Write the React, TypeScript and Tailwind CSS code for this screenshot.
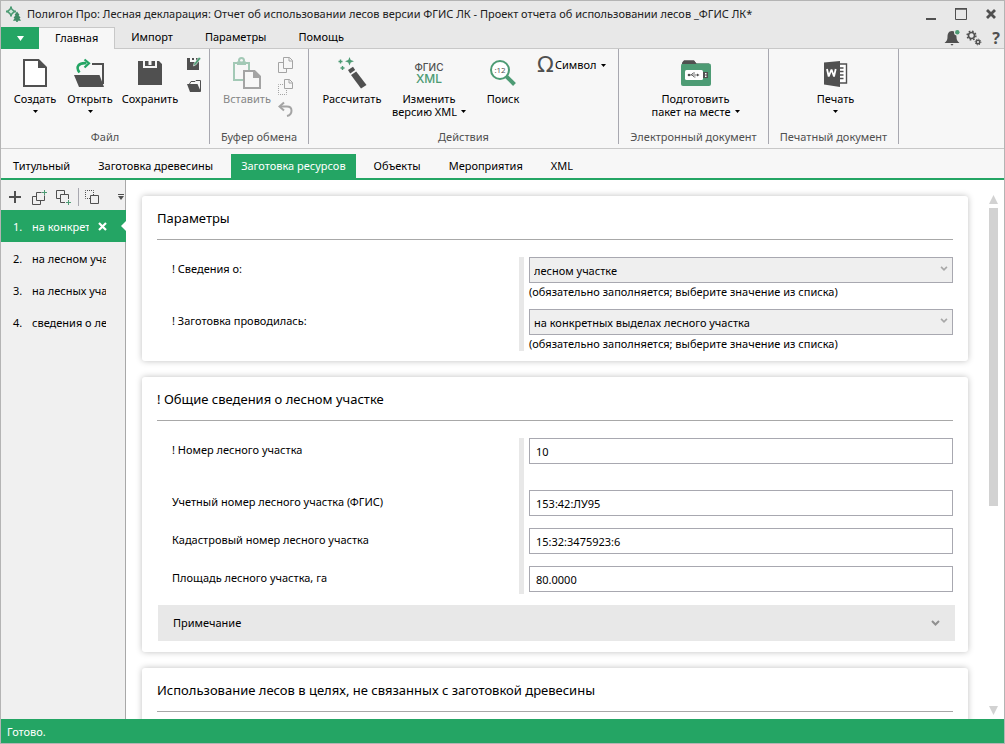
import { useState, type ReactNode } from "react";

function LogoIcon() {
  return (
    <svg className="size-4" viewBox="0 0 16 16" fill="none">
      <path d="M6 .5v2M6 8.500v2M1 5.500h2M9 5.500h2" stroke="#4d9b74" strokeWidth="2" />
      <path d="M6 2.200 9.300 5.500 6 8.800 2.700 5.500Z" fill="#cfe6da" stroke="#4d9b74" strokeWidth="1.600" />
      <path d="M12 5.500 14.600 9h-1l2 3h-1.200l1.600 2.700h-3.200V16h-1.600v-1.300H8L9.600 12H8.500l2-3h-1Z" fill="#3f8a65" />
    </svg>
  );
}

function NewIcon() {
  return (
    <svg className="h-8 w-7" viewBox="0 0 28 32">
      <path d="M3 3h14.500L25 10.500V29H3Z" fill="#fff" stroke="#505050" strokeWidth="2" />
      <path d="M17 2 26 11h-9Z" fill="#505050" />
    </svg>
  );
}

function OpenIcon() {
  return (
    <svg className="h-8 w-8" viewBox="0 0 32 32">
      <path d="M18 7h11v20" fill="none" stroke="#505050" strokeWidth="2" />
      <path d="M0 18h25.500L30 30H5Z" fill="#505050" />
      <path d="M5.500 15.500C1 9.500 5 5.500 12.500 6.200" fill="none" stroke="#24a564" strokeWidth="2.600" />
      <path d="M10.500 2.500 15 6.200l-4.500 4.300" fill="none" stroke="#24a564" strokeWidth="2.200" />
    </svg>
  );
}

function SaveIcon() {
  return (
    <svg className="h-8 w-6" viewBox="0 0 24 32">
      <path d="M0 4h5v9h14V4h2l3 3v21H0Z" fill="#505050" />
      <path d="M7 4h10v7H7Z" fill="#505050" />
      <path d="M5 4h2v5h10V4h2v7H5Z" fill="#f7f7f7" />
      <path d="M10.500 4h3v4h-3Z" fill="#f7f7f7" />
      <path d="M5 11h14v3H5Z" fill="#505050" />
    </svg>
  );
}

function SaveAsIcon() {
  return (
    <svg className="size-[14px]" viewBox="0 0 14 14">
      <path d="M0 1h3v4h6V1h3v12H0Z" fill="#505050" />
      <path d="M5 1h2v2H5Z" fill="#505050" />
      <path d="M12 0 7 6.500 6.500 9l2.200-1L14 1.500Z" fill="#4d9b74" stroke="#f7f7f7" strokeWidth=".6" />
    </svg>
  );
}

function FolderIcon() {
  return (
    <svg className="size-[14px]" viewBox="0 0 14 14">
      <path d="M2.500 5 4 2.500h4L9 1.500h4.500V12" fill="none" stroke="#505050" />
      <path d="M0 5h10.500L14 13H3Z" fill="#505050" />
    </svg>
  );
}

function PasteIcon() {
  return (
    <svg className="h-8 w-7" viewBox="0 0 28 32" fill="none">
      <path d="M10 23H1V6h15v7" stroke="#a3c9b6" strokeWidth="2" />
      <path d="M4 4.500h9V8H4Z" fill="#a3c9b6" />
      <circle cx="8.500" cy="3.500" r="2.500" stroke="#a3c9b6" strokeWidth="2" />
      <path d="M11 14h10.500l5.500 5.500V31H11Z" fill="#f7f7f7" stroke="#a4a4a4" strokeWidth="2" />
      <path d="m20 13 8 8h-8Z" fill="#a4a4a4" />
    </svg>
  );
}

function CopyIcon() {
  return (
    <svg className="size-4" viewBox="0 0 16 16" fill="none" stroke="#a4a4a4">
      <path d="M5 5.500H.5v10h8V12" />
      <path d="M5.500.5h6l3 3v8h-9Z" />
      <path d="M11 .5V4h3.500" />
    </svg>
  );
}

function CutIcon() {
  return (
    <svg className="size-4" viewBox="0 0 16 16" fill="none" stroke="#a4a4a4">
      <path d="M5 5.500H.5v10h8V11" strokeDasharray="1 1" />
      <path d="M6.500.5h5l3 3v6h-8Z" />
      <path d="M11 .5V4h3.500" />
    </svg>
  );
}

function UndoIcon() {
  return (
    <svg className="size-4" viewBox="0 0 16 16" fill="none" stroke="#a4a4a4" strokeWidth="2">
      <path d="M6 1.500 1.500 5.500 6 9.500" />
      <path d="M2 5.500h7c6 0 6 8 0 9.500" />
    </svg>
  );
}

function WandIcon() {
  return (
    <svg className="size-8" viewBox="0 0 32 32">
      <path d="M13.500 0 14.700 3 18 4.300 14.700 5.500 13.500 8.500 12.300 5.500 9 4.300 12.300 3Z" fill="#4d9b74" />
      <path d="M4.500 2.500v4M2.500 4.500h4M6.500 9v4M4.500 11h4" stroke="#4d9b74" strokeWidth="1.400" />
      <path d="m12 13 5-3.200 2.200 3.200-5 3.400Z" fill="#505050" />
      <path d="m15 18 5.200-3.600L30.500 28l-5.500 3.600Z" fill="#505050" />
    </svg>
  );
}

function VersionIcon() {
  return (
    <span className="flex h-8 flex-col items-center justify-center font-['Inter',sans-serif] font-medium" aria-hidden>
      <span className="text-[10px] leading-[12px] text-[#505050]">ФГИС</span>
      <span className="text-[12px] leading-[12px] text-[#4d9b74]">XML</span>
    </span>
  );
}

function SearchIcon() {
  return (
    <svg className="size-8" viewBox="0 0 32 32">
      <circle cx="13" cy="13" r="9" fill="#fff" stroke="#4d9b74" strokeWidth="2" />
      <path d="m19.500 19.500 8 8" stroke="#4d9b74" strokeWidth="4" />
      <text x="13" y="15.500" textAnchor="middle" fontSize="8" fill="#505050" fontFamily="Open Sans, sans-serif">:12</text>
    </svg>
  );
}

function UsbFolderIcon() {
  return (
    <svg className="h-8 w-[30px]" viewBox="0 0 30 32">
      <path d="M1 7 3 3.500h10L15.500 6.500H28v4H1Z" fill="#505050" />
      <rect x="0" y="6.500" width="30" height="22.500" rx="2" fill="#4d9b74" />
      <path d="M1 7V5.500L3 3.500h10L15.500 7Z" fill="#505050" />
      <rect x="4" y="13" width="18" height="10" rx="1.500" fill="#fff" />
      <path d="M22 15h5v6h-5Z" fill="#505050" />
      <path d="M24 16h1.500v1.500H24ZM24 18.500h1.500V20H24Z" fill="#fff" />
      <path d="M7.500 18h9M10 18l2-2h2M11 18l2 2h1.500" fill="none" stroke="#505050" strokeWidth=".8" />
      <path d="m18.500 18-2.500-1.500v3Z" fill="#505050" />
      <circle cx="8" cy="18" r="1.300" fill="#505050" />
    </svg>
  );
}

function WordIcon() {
  return (
    <svg className="h-8 w-6" viewBox="0 0 24 32">
      <path d="M13 7h9.500v19H13" fill="#fff" stroke="#505050" strokeWidth="1.400" />
      <path d="M16 11h3.500M16 14.500h3.500M16 18h3.500M16 21.500h3.500" stroke="#505050" strokeWidth="1.600" />
      <path d="M0 5.500 16 4v26L0 27.500Z" fill="#505050" />
      <path d="m3 12 1.700 7.500L7.500 12.500l2.500 7L11.700 12" fill="none" stroke="#fff" strokeWidth="1.800" strokeLinejoin="bevel" />
    </svg>
  );
}

function BellIcon() {
  return (
    <svg className="h-4 w-4" viewBox="0 0 16 16">
      <path d="M8 1c3.500 0 4.500 3 4.500 6 0 3 1 4.500 3 6H.5c2-1.500 3-3 3-6 0-3 1-6 4.500-6Z" fill="#505050" />
      <path d="M6.500 14h3L8 15.700Z" fill="#505050" />
      <circle cx="13" cy="2.500" r="3" fill="#e8e8e8" />
      <circle cx="13.300" cy="2.300" r="2.200" fill="#4d9b74" />
    </svg>
  );
}

function GearsIcon() {
  return (
    <svg className="h-4 w-4" viewBox="0 0 16 16" fill="none" stroke="#505050">
      <circle cx="5.500" cy="5.500" r="3" strokeWidth="1.600" />
      <circle cx="5.500" cy="5.500" r="4.400" strokeWidth="1.400" strokeDasharray="1.700 1.756" />
      <circle cx="12" cy="12" r="1.800" strokeWidth="1.500" />
      <circle cx="12" cy="12" r="2.900" strokeWidth="1" strokeDasharray="1.100 1.177" />
    </svg>
  );
}

function Caret() {
  return (
    <svg className="inline-block h-[3px] w-[5px]" viewBox="0 0 5 3">
      <path d="M0 0h5L2.500 3Z" fill="#000" />
    </svg>
  );
}

function Chevron({ className }: { className: string }) {
  return (
    <svg className={className} viewBox="0 0 9 6" fill="none" stroke="currentColor">
      <path d="m1 1 3.500 3.500L8 1" strokeWidth="2" />
    </svg>
  );
}

function Group({ title, className, children }: { title: string; className: string; children: ReactNode }) {
  return (
    <section className={`flex h-[95px] shrink-0 flex-col border-r border-[#a8a8b0] ${className}`}>
      <div className="flex flex-1">{children}</div>
      <h2 className="h-4 text-center leading-[18px] whitespace-nowrap text-[#505050]">{title}</h2>
    </section>
  );
}

type BigProps = { icon: ReactNode; lines: string[]; className: string; menu?: "inline" | "below"; disabled?: boolean };

function BigButton({ icon, lines, className, menu, disabled }: BigProps) {
  return (
    <button
      disabled={disabled}
      className={`flex flex-col items-center pt-2 leading-[13px] whitespace-nowrap disabled:text-[#858585] ${className}`}
    >
      {icon}
      <span className="mt-[3px]">
        {lines.map((line, i) => (
          <span key={line} className="flex items-center justify-center gap-1">
            {line}
            {menu === "inline" && i === lines.length - 1 && <Caret />}
          </span>
        ))}
      </span>
      {menu === "below" && (
        <span className="mt-[5px] flex">
          <Caret />
        </span>
      )}
    </button>
  );
}

function Card({ title, children }: { title: string; children?: ReactNode }) {
  return (
    <section className="rounded-[3px] bg-white px-[15px] shadow-[0_0_6px_rgba(0,0,0,0.25)]">
      <h2 className="h-11 border-b border-[#a8a8a8] text-[13px] leading-[44px]">{title}</h2>
      <div className="pt-[17px]">{children}</div>
    </section>
  );
}

function Row({ id, label, className, children }: { id: string; label: string; className: string; children: ReactNode }) {
  return (
    <div className={`grid grid-cols-[362fr_434fr] ${className}`}>
      <label htmlFor={id} className="pl-[15px] leading-6">
        {label}
      </label>
      <div className="border-l-[5px] border-[#e8e8e8] pl-[5px]">{children}</div>
    </div>
  );
}

function SelectField({ id, value }: { id: string; value: string }) {
  return (
    <>
      <div className="relative">
        <select id={id} className="block h-[26px] w-full appearance-none border border-[#a8a8b0] bg-[#efefef] px-1 pt-px leading-6">
          <option>{value}</option>
        </select>
        <Chevron className="pointer-events-none absolute top-[9px] right-[5px] h-[5px] w-[8px] text-[#a8a8a8]" />
      </div>
      <p className="pt-[2px] leading-[14px]">(обязательно заполняется; выберите значение из списка)</p>
    </>
  );
}

function TextField({ id, value }: { id: string; value: string }) {
  return <input id={id} defaultValue={value} className="block h-[26px] w-full border border-[#a8a8b0] bg-white px-[6px]" />;
}

const ribbonTabs = ["Импорт", "Параметры", "Помощь"];
const sections = ["Титульный", "Заготовка древесины", "Заготовка ресурсов", "Объекты", "Мероприятия", "XML"];
const entries = ["на конкретных выделах", "на лесном участке", "на лесных участках", "сведения о лесосеках"];

export default function App() {
  const [section, setSection] = useState(2);
  const [entry, setEntry] = useState(0);

  return (
    <div className="flex h-screen flex-col overflow-hidden border border-[#b4b4b4] bg-white font-['Noto_Sans','Open_Sans',sans-serif] text-[11px] text-black">
      <header className="bg-[#e8e8e8]">
        <div className="flex h-[26px] items-center pr-2 pl-1">
          <LogoIcon />
          <h1 className="ml-[6px] flex-1 truncate text-[#202020]">
            Полигон Про: Лесная декларация: Отчет об использовании лесов версии ФГИС ЛК - Проект отчета об использовании лесов _ФГИС ЛК*
          </h1>
          <div className="flex gap-[19px]">
            <button aria-label="Свернуть">
              <svg className="h-3 w-[10px]" viewBox="0 0 10 12">
                <path d="M0 10h10v2H0Z" fill="#505050" />
              </svg>
            </button>
            <button aria-label="Развернуть">
              <svg className="size-3" viewBox="0 0 12 12">
                <path d="M.5 1h11v10.500H.5Z" fill="none" stroke="#505050" />
                <path d="M0 0h12v1.500H0Z" fill="#505050" />
              </svg>
            </button>
            <button aria-label="Закрыть">
              <svg className="h-3 w-[10px]" viewBox="0 0 10 12">
                <path d="m1 2 8 8M9 2l-8 8" stroke="#505050" strokeWidth="2.800" />
              </svg>
            </button>
          </div>
        </div>
        <nav className="flex h-[22px] items-stretch border-b border-[#c8c8c8]">
          <button aria-label="Меню" className="-mb-px flex w-[38px] items-center justify-center bg-[#24a564]">
            <svg className="h-[5px] w-[7px]" viewBox="0 0 7 5">
              <path d="M0 0h7L3.500 5Z" fill="#fff" />
            </svg>
          </button>
          <button className="-mb-px border-t border-r border-[#c8c8c8] bg-[#f7f7f7] px-4">Главная</button>
          {ribbonTabs.map((tab) => (
            <button key={tab} className="px-4">
              {tab}
            </button>
          ))}
          <div className="ml-auto flex items-center gap-[6px]">
            <button aria-label="Уведомления">
              <BellIcon />
            </button>
            <button aria-label="Настройки">
              <GearsIcon />
            </button>
            <button className="w-4 text-base leading-4 font-bold text-[#505050]" aria-label="Справка">
              ?
            </button>
          </div>
        </nav>
      </header>

      <div className="flex h-[100px] shrink-0 border-b border-[#c8c8c8] bg-[#f7f7f7]">
        <Group title="Файл" className="w-[209px]">
          <BigButton icon={<NewIcon />} lines={["Создать"]} className="ml-[7px] w-[54px]" menu="below" />
          <BigButton icon={<OpenIcon />} lines={["Открыть"]} className="w-14" menu="below" />
          <BigButton icon={<SaveIcon />} lines={["Сохранить"]} className="w-16" />
          <div className="flex flex-col gap-2 pt-2 pl-[5px]">
            <button aria-label="Сохранить как">
              <SaveAsIcon />
            </button>
            <button aria-label="Открыть папку">
              <FolderIcon />
            </button>
          </div>
        </Group>
        <Group title="Буфер обмена" className="w-[99px]">
          <BigButton icon={<PasteIcon />} lines={["Вставить"]} className="ml-2 w-[58px]" disabled />
          <div className="flex flex-col gap-[6px] pt-2 pl-[2px]">
            <button disabled aria-label="Копировать">
              <CopyIcon />
            </button>
            <button disabled aria-label="Вырезать">
              <CutIcon />
            </button>
            <button disabled aria-label="Отменить">
              <UndoIcon />
            </button>
          </div>
        </Group>
        <Group title="Действия" className="w-[310px]">
          <BigButton icon={<WandIcon />} lines={["Рассчитать"]} className="ml-[7px] w-[72px]" />
          <BigButton icon={<VersionIcon />} lines={["Изменить", "версию XML"]} className="w-[82px]" menu="inline" />
          <BigButton icon={<SearchIcon />} lines={["Поиск"]} className="w-[66px]" />
          <button className="flex h-8 items-center">
            <span className="w-[19px] font-['DejaVu_Sans',sans-serif] text-[22px] leading-6 text-[#505050]">Ω</span>
            <span className="mr-1">Символ</span>
            <Caret />
          </button>
        </Group>
        <Group title="Электронный документ" className="w-[150px]">
          <BigButton icon={<UsbFolderIcon />} lines={["Подготовить", "пакет на месте"]} className="ml-1 w-full" menu="inline" />
        </Group>
        <Group title="Печатный документ" className="w-[130px]">
          <BigButton icon={<WordIcon />} lines={["Печать"]} className="ml-1 w-full" menu="below" />
        </Group>
      </div>

      <nav className="flex h-[31px] shrink-0 items-end gap-2 border-b-2 border-[#24a564] bg-[#f7f7f7] pl-[2px]">
        {sections.map((name, i) => (
          <button
            key={name}
            onClick={() => setSection(i)}
            className={i === section ? "h-6 bg-[#24a564] px-[10px] pt-px text-white" : "h-6 px-[10px] pt-px"}
          >
            {name}
          </button>
        ))}
      </nav>

      <div className="flex min-h-0 flex-1">
        <aside className="w-[125px] shrink-0 border-r border-[#a8a8a8] bg-[#f0f0f0]">
          <div className="flex h-[30px] items-center pt-1 pl-2 text-[#505050]">
            <button aria-label="Добавить">
              <svg className="size-3" viewBox="0 0 12 12" stroke="currentColor" strokeWidth="2">
                <path d="M0 6h12M6 0v12" />
              </svg>
            </button>
            <button className="ml-[11px]" aria-label="Копировать перед">
              <svg className="size-[15px]" viewBox="0 0 15 15" fill="none" stroke="currentColor">
                <path d="M4 6.500H.5v8h8V11" />
                <path d="M9.500 2.500h-5v8h8V5.500" />
                <path d="M12.500 0v5M10 2.500h5" stroke="#4d9b74" />
              </svg>
            </button>
            <button className="ml-[9px]" aria-label="Копировать после">
              <svg className="size-[15px]" viewBox="0 0 15 15" fill="none" stroke="currentColor">
                <path d="M4 8.500H.5v-8h8V4" />
                <path d="M9 12.500H4.500v-8h8V9" />
                <path d="M12.500 10v5M10 12.500h5" stroke="#4d9b74" />
              </svg>
            </button>
            <span className="ml-[7px] h-[18px] w-px bg-[#a8a8b0]" />
            <button className="ml-[6px]" aria-label="Выделить">
              <svg className="size-[15px]" viewBox="0 0 15 15" fill="none" stroke="currentColor">
                <path d="M5 8.500H.5v-8h8V5" strokeDasharray="1 1" />
                <path d="M5.500 5.500h8v8h-8Z" />
              </svg>
            </button>
            <button className="mr-px ml-auto" aria-label="Ещё">
              <svg className="h-[6px] w-[6px]" viewBox="0 0 6 6" fill="currentColor">
                <path d="M0 0h6v1H0ZM0 2h6L3 6Z" />
              </svg>
            </button>
          </div>
          <ol>
            {entries.map((name, i) => (
              <li key={name} className={i === entry ? "-mr-px flex h-8 items-center bg-[#24a564] text-white" : "flex h-8 items-center"}>
                <button onClick={() => setEntry(i)} className="flex min-w-0 flex-1 pt-[2px] pl-3 text-left">
                  <span className="w-[19px] shrink-0">{i + 1}.</span>
                  <span className={i === entry ? "overflow-hidden whitespace-nowrap" : "mr-[19px] overflow-hidden whitespace-nowrap"}>{name}</span>
                </button>
                {i === entry && (
                  <>
                    <button className="ml-[9px]" aria-label="Удалить">
                      <svg className="size-[9px]" viewBox="0 0 9 9">
                        <path d="m1 1 7 7M8 1 1 8" stroke="#fff" strokeWidth="2.200" />
                      </svg>
                    </button>
                    <svg className="ml-[14px] h-[10px] w-[5px]" viewBox="0 0 5 10">
                      <path d="M5 0v10L0 5Z" fill="#fff" />
                    </svg>
                  </>
                )}
              </li>
            ))}
          </ol>
        </aside>

        <main className="flex flex-1 flex-col gap-4 overflow-y-auto px-4 pt-4 [scrollbar-width:none] *:shrink-0">
          <Card title="Параметры">
            <Row id="about" label="! Сведения о:" className="h-[52px]">
              <SelectField id="about" value="лесном участке" />
            </Row>
            <Row id="place" label="! Заготовка проводилась:" className="h-[42px]">
              <SelectField id="place" value="на конкретных выделах лесного участка" />
            </Row>
            <div className="h-[10px]" />
          </Card>
          <Card title="! Общие сведения о лесном участке">
            <Row id="number" label="! Номер лесного участка" className="h-[52px]">
              <TextField id="number" value="10" />
            </Row>
            <Row id="account" label="Учетный номер лесного участка (ФГИС)" className="h-[38px]">
              <TextField id="account" value="153:42:ЛУ95" />
            </Row>
            <Row id="cadastre" label="Кадастровый номер лесного участка" className="h-[38px]">
              <TextField id="cadastre" value="15:32:3475923:6" />
            </Row>
            <Row id="area" label="Площадь лесного участка, га" className="h-7">
              <TextField id="area" value="80.0000" />
            </Row>
            <div className="-mr-[2px] ml-px py-[11px]">
              <button className="flex h-9 w-full items-center justify-between bg-[#e8e8e8] px-[15px]">
                Примечание
                <Chevron className="h-[6px] w-[9px] text-[#909090]" />
              </button>
            </div>
          </Card>
          <Card title="Использование лесов в целях, не связанных с заготовкой древесины" />
        </main>

        <div className="flex w-5 shrink-0 flex-col pt-[15px] pb-1 pl-[5px]" aria-hidden>
          <svg className="h-[9px] w-[9px]" viewBox="0 0 9 9">
            <path d="M4.500 0 9 9H0Z" fill="#d2d2d2" />
          </svg>
          <div className="mt-1 h-[298px] w-[9px] bg-[#d2d2d2]" />
          <svg className="mt-auto h-[9px] w-[9px]" viewBox="0 0 9 9">
            <path d="M0 0h9L4.500 9Z" fill="#d2d2d2" />
          </svg>
        </div>
      </div>

      <footer className="h-6 shrink-0 bg-[#24a564] px-[6px] leading-[26px] text-white">Готово.</footer>
    </div>
  );
}
